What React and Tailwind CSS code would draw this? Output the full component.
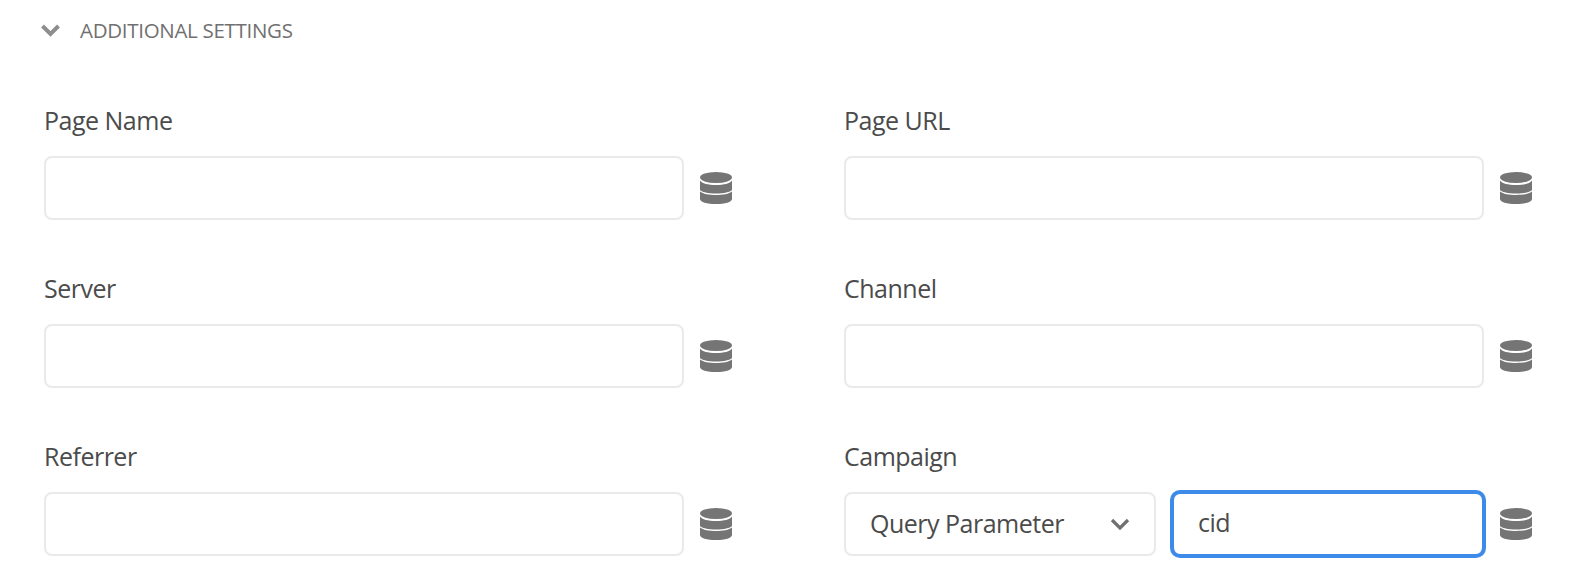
import React from 'react';

const FONT = "font-['Open_Sans','Noto_Sans',sans-serif]";

const DataIcon = () => (
  <svg className="w-8 h-8 ml-4 shrink-0" viewBox="0 0 32 32">
    <ellipse fill="#757575" cx="16" cy="5.500" rx="16" ry="5.500" />
    <path fill="#757575" d="M0 8.500C2 11.500 8 13 16 13s14-1.500 16-4.500V18c-2 2.300-8 3.500-16 3.500S2 20.300 0 18z" />
    <path fill="#757575" d="M0 19.500C3 22 9 23 16 23s13-1 16-3.500V27c0 3-7 5-16 5S0 30 0 27z" />
  </svg>
);

const Chevron = ({ className, weight = 4 }) => (
  <svg className={className} viewBox="0 0 20 13">
    <path d="M2 2l8 8 8-8" fill="none" stroke="currentColor" strokeWidth={weight} />
  </svg>
);

const TextField = ({ label }) => (
  <div>
    <label className="block text-[25px] leading-9 tracking-[-0.5px] text-[#4b4b4b] mb-[18px]">{label}</label>
    <div className="flex items-center">
      <input className="w-[640px] h-16 bg-white border-2 border-[#eaeaea] rounded-lg outline-none" />
      <DataIcon />
    </div>
  </div>
);

const CampaignField = () => (
  <div>
    <label className="block text-[25px] leading-9 tracking-[-0.5px] text-[#4b4b4b] mb-[18px]">Campaign</label>
    <div className="flex items-center h-16">
      <div className="w-[312px] h-16 flex items-center justify-between pl-6 pr-6 bg-white border-2 border-[#eaeaea] rounded-lg">
        <span className="text-[25px] tracking-[-0.5px] text-[#4b4b4b]">Query Parameter</span>
        <Chevron className="w-[20px] h-[13px] text-[#707070]" weight={3.2} />
      </div>
      <input
        defaultValue="cid"
        className="w-[316px] h-[68px] ml-[14px] -mr-[2px] pl-6 pb-1 bg-white border-4 border-[#3d8be8] rounded-[10px] outline-none text-[25px] tracking-[-0.5px] text-[#4b4b4b]"
      />
      <DataIcon />
    </div>
  </div>
);

export default function App() {
  return (
    <div className={`w-[1572px] h-[588px] bg-white overflow-hidden ${FONT}`}>
      <div className="flex items-center h-[30px] mt-[15px] pl-10">
        <Chevron className="w-[21px] h-[13px] text-[#8e8e8e]" />
        <span className="ml-[19px] text-[20.5px] tracking-[-0.3px] text-[#707070]">ADDITIONAL SETTINGS</span>
      </div>
      <div className="grid grid-cols-[800px_1fr] gap-y-[50px] pl-11 mt-[57px]">
        <TextField label="Page Name" />
        <TextField label="Page URL" />
        <TextField label="Server" />
        <TextField label="Channel" />
        <TextField label="Referrer" />
        <CampaignField />
      </div>
    </div>
  );
}
